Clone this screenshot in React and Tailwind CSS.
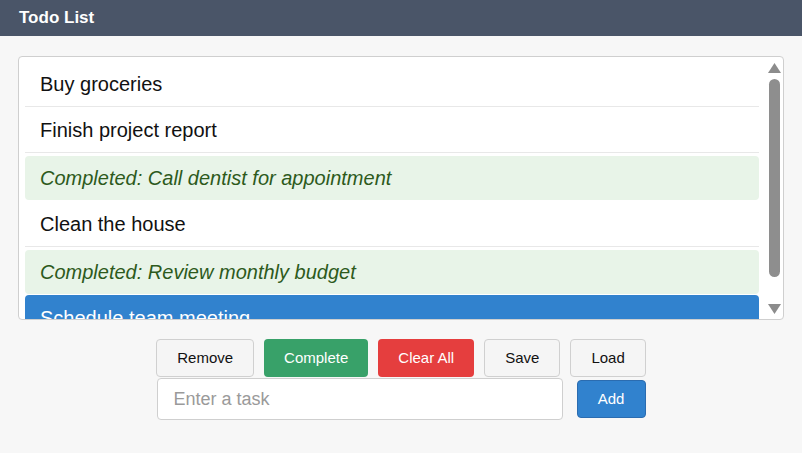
import React, { useState } from 'react';

const todos = [
  { id: 1, text: 'Buy groceries', done: false },
  { id: 2, text: 'Finish project report', done: false },
  { id: 3, text: 'Call dentist for appointment', done: true },
  { id: 4, text: 'Clean the house', done: false },
  { id: 5, text: 'Review monthly budget', done: true },
  { id: 6, text: 'Schedule team meeting', done: false },
];

function TodoItem({ todo, selected, onSelect }) {
  if (selected) {
    return (
      <div
        onClick={onSelect}
        className="h-[46px] shrink-0 flex items-center px-[15px] rounded-[4px] bg-[#3182ce] text-white"
      >
        {todo.text}
      </div>
    );
  }
  if (todo.done) {
    return (
      <div
        onClick={onSelect}
        className="h-[44px] shrink-0 mt-[3px] mb-[1px] flex items-center px-[15px] rounded-[4px] bg-[#e8f4e8] text-[#2d5a1c] italic"
      >
        Completed: {todo.text}
      </div>
    );
  }
  return (
    <div
      onClick={onSelect}
      className="h-[46px] shrink-0 flex items-center px-[15px] border-b border-[#e8e8e8] text-[#111]"
    >
      {todo.text}
    </div>
  );
}

function Scrollbar() {
  return (
    <div className="w-[18px] shrink-0 flex flex-col items-center">
      <svg width="13" height="10" viewBox="0 0 13 10" className="mt-[6px]">
        <path d="M6.5 0 L13 10 L0 10 Z" fill="#8c8c8c" />
      </svg>
      <div className="mt-[6px] w-[11px] h-[198px] rounded-full bg-[#8e8e8e]" />
      <svg width="13" height="10" viewBox="0 0 13 10" className="mt-[27px]">
        <path d="M0 0 L13 0 L6.5 10 Z" fill="#8c8c8c" />
      </svg>
    </div>
  );
}

export default function App() {
  const [selected, setSelected] = useState(6);
  const [task, setTask] = useState('');

  const grayBtn =
    'h-[38px] px-5 rounded-[4px] border border-[#d0d0d0] bg-[#f5f5f5] text-[15px] text-[#111]';

  return (
    <div
      className="min-h-[453px] bg-[#f7f7f7]"
      style={{ fontFamily: '"Liberation Sans", Arial, sans-serif' }}
    >
      <header className="h-[36px] bg-[#4a5568] flex items-center px-[19px]">
        <h1 className="text-[17px] font-bold text-white">Todo List</h1>
      </header>

      <main className="pt-[20px] px-[18px]">
        <div className="h-[264px] flex bg-white border border-[#cfcfcf] rounded-[4px] overflow-hidden">
          <div className="flex-1 flex flex-col px-[6px] pt-[4px] overflow-hidden text-[20px]">
            {todos.map((t) => (
              <TodoItem
                key={t.id}
                todo={t}
                selected={selected === t.id}
                onSelect={() => setSelected(t.id)}
              />
            ))}
          </div>
          <Scrollbar />
        </div>

        <div className="mt-[19px] flex justify-center gap-[10px]">
          <button className={grayBtn}>Remove</button>
          <button className="h-[38px] px-5 rounded-[4px] bg-[#38a169] text-[15px] text-white">
            Complete
          </button>
          <button className="h-[38px] px-5 rounded-[4px] bg-[#e53e3e] text-[15px] text-white">
            Clear All
          </button>
          <button className={grayBtn}>Save</button>
          <button className={grayBtn}>Load</button>
        </div>

        <div className="mt-[1px] flex justify-center items-center gap-[14px]">
          <input
            value={task}
            onChange={(e) => setTask(e.target.value)}
            placeholder="Enter a task"
            className="w-[406px] h-[42px] px-[16px] bg-white border border-[#cfcfcf] rounded-[4px] text-[18px] text-[#111] placeholder:text-[#9a9a9a] outline-none"
          />
          <button className="h-[38px] w-[69px] rounded-[4px] border border-[#2b6cb0] bg-[#3182ce] text-[15px] text-white">
            Add
          </button>
        </div>
      </main>
    </div>
  );
}
